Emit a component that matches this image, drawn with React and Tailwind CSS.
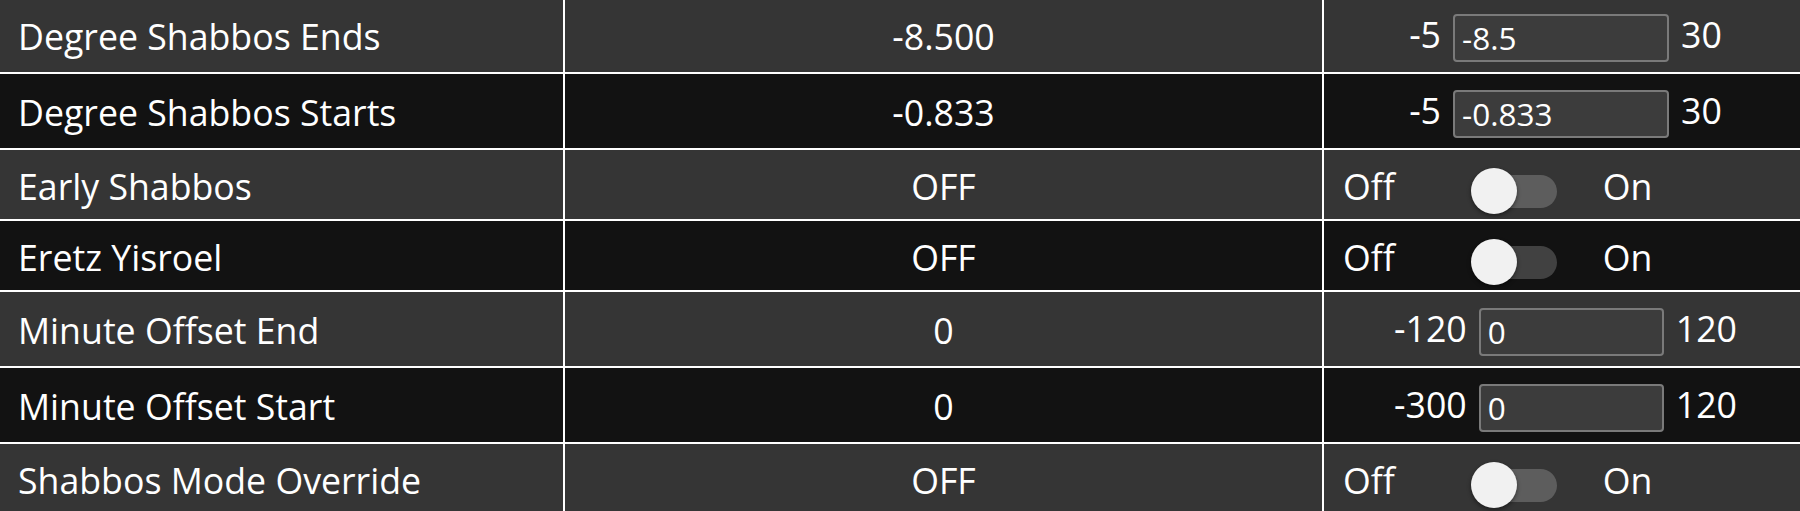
import React from "react";

const rows = [
  { label: "Degree Shabbos Ends", value: "-8.500", type: "input", min: "-5", max: "30", input: "-8.5", wide: true, dark: false },
  { label: "Degree Shabbos Starts", value: "-0.833", type: "input", min: "-5", max: "30", input: "-0.833", wide: true, dark: true },
  { label: "Early Shabbos", value: "OFF", type: "toggle", dark: false },
  { label: "Eretz Yisroel", value: "OFF", type: "toggle", dark: true },
  { label: "Minute Offset End", value: "0", type: "input", min: "-120", max: "120", input: "0", wide: false, dark: false },
  { label: "Minute Offset Start", value: "0", type: "input", min: "-300", max: "120", input: "0", wide: false, dark: true },
  { label: "Shabbos Mode Override", value: "OFF", type: "toggle", dark: false },
];

function Switch() {
  return (
    <div className="relative ml-[76px] mt-[8px] h-[46px] w-[86px] shrink-0">
      <div className="absolute left-[6px] right-0 top-[7px] h-[33px] rounded-full bg-white/20" />
      <div className="absolute left-0 top-0 h-[46px] w-[46px] rounded-full bg-[#f1f1f1] shadow-[0_2px_4px_rgba(0,0,0,0.45)]" />
    </div>
  );
}

function Row({ r }) {
  const bg = r.dark ? "bg-[#121212]" : "bg-[#353535]";
  const h = r.type === "input" ? "h-[76px]" : "h-[71px]";
  return (
    <div className={`grid grid-cols-[565px_759px_1fr] border-b-2 border-white ${bg} ${h}`}>
      <div className="flex items-center border-r-2 border-white pl-[18px] pt-[4px]">
        <span>{r.label}</span>
      </div>
      <div className="flex items-center justify-center border-r-2 border-white pt-[4px]">
        <span>{r.value}</span>
      </div>
      {r.type === "input" ? (
        <div className="flex items-center justify-center gap-[12px] pl-[7px]">
          <span>{r.min}</span>
          <input
            readOnly
            value={r.input}
            className={`mt-[5px] h-[48px] ${r.wide ? "w-[216px]" : "w-[185px]"} rounded-[4px] border-2 border-[#7a7a7a] bg-[#3c3c3c] px-[7px] font-['Open_Sans',sans-serif] text-[31.5px] text-white outline-none`}
          />
          <span>{r.max}</span>
        </div>
      ) : (
        <div className="flex items-center pl-[19px] pt-[4px]">
          <span>Off</span>
          <Switch />
          <span className="ml-[46px]">On</span>
        </div>
      )}
    </div>
  );
}

export default function App() {
  return (
    <div className="h-[511px] w-[1800px] overflow-hidden bg-[#121212] font-['Open_Sans',sans-serif] text-[35.7px] text-white">
      <div className="-mt-[2px]">
        {rows.map((r) => (
          <Row key={r.label} r={r} />
        ))}
      </div>
    </div>
  );
}
